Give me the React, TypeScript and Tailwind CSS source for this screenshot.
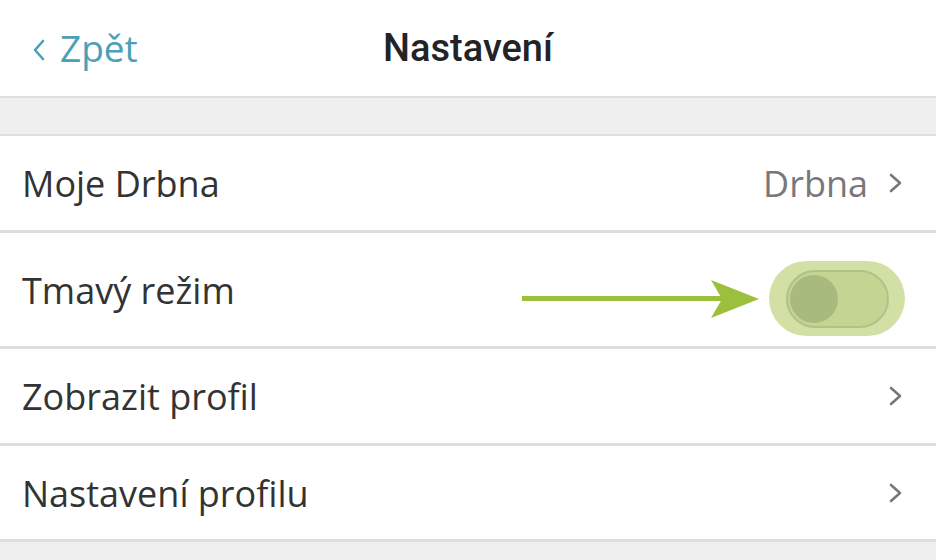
import React from "react";

const Chevron = ({ className = "" }: { className?: string }) => (
  <svg width="16" height="22" viewBox="0 0 16 22" className={className}>
    <path d="M3 3 L12 11 L3 19" fill="none" stroke="#77777c" strokeWidth="2.6" strokeLinecap="round" strokeLinejoin="round" />
  </svg>
);

const FONT = { fontFamily: "'Open Sans', Lato, sans-serif" };

const Row = ({ label, h, children }: { label: string; h: string; children?: React.ReactNode }) => (
  <div className={`flex items-center justify-between pl-[22px] pr-[32px] border-b-[3px] border-[#dedede] bg-white ${h}`}>
    <span className="text-[36px] text-[#333333] leading-none pt-[2px]" style={FONT}>{label}</span>
    {children}
  </div>
);

export default function App() {
  return (
    <div className="w-[936px] h-[560px] overflow-hidden bg-[#efefef] flex flex-col" style={FONT}>
      <div className="relative h-[98px] bg-white border-b-2 border-[#dedede] flex items-center justify-center shrink-0">
        <div className="absolute left-[32px] top-[29px] flex items-center gap-[14px] text-[#4aa0b8]">
          <svg width="14" height="24" viewBox="0 0 14 24" className="mt-[4px]">
            <path d="M11 3 L3 12 L11 21" fill="none" stroke="#4aa0b8" strokeWidth="2.6" strokeLinecap="round" strokeLinejoin="round" />
          </svg>
          <span className="text-[37px] leading-none" style={FONT}>Zpět</span>
        </div>
        <span className="text-[38px] font-medium text-[#222326]" style={{ fontFamily: "Roboto, sans-serif" }}>Nastavení</span>
      </div>
      <div className="h-[38px] bg-[#efefef] border-b-2 border-[#dedede] shrink-0" />
      <Row label="Moje Drbna" h="h-[97px]">
        <div className="flex items-center gap-[20px]">
          <span className="text-[36px] text-[#77777c] leading-none pt-[2px]" style={FONT}>Drbna</span>
          <Chevron />
        </div>
      </Row>
      <div className="relative flex items-center justify-between pl-[22px] pr-[32px] border-b-[3px] border-[#dedede] bg-white h-[116px]">
        <span className="text-[36px] text-[#333333] leading-none pt-[2px]" style={FONT}>Tmavý režim</span>
        <div className="flex items-center mt-[18px]">
          <svg width="240" height="40" viewBox="0 0 240 40" className="mr-[10px]">
            <rect x="3" y="17" width="205" height="5" fill="#9cbf3e" />
            <path d="M192 1 L240 20 L192 39 L203 20 Z" fill="#9cbf3e" />
          </svg>
          <div className="w-[136px] h-[75px] rounded-full bg-[#d3e0a5] flex items-center justify-center -mr-[1px]">
            <div className="w-[103px] h-[58px] rounded-full bg-[#c3d493] border-2 border-[#afc387] flex items-center pl-[2px]">
              <div className="w-[48px] h-[48px] rounded-full bg-[#a8ba7e]" />
            </div>
          </div>
        </div>
      </div>
      <Row label="Zobrazit profil" h="h-[97px]">
        <Chevron />
      </Row>
      <Row label="Nastavení profilu" h="h-[96px]">
        <Chevron />
      </Row>
    </div>
  );
}
